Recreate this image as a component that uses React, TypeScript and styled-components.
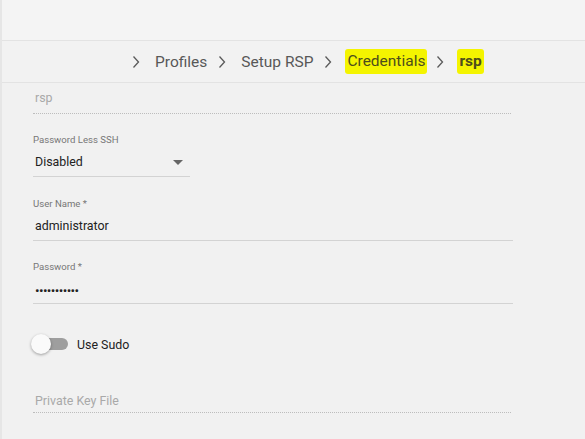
import React from "react";
import styled, { createGlobalStyle } from "styled-components";

const Global = createGlobalStyle`
  html, body { margin: 0; padding: 0; background: #f1f1f1; }
  body { font-family: Roboto, "Liberation Sans", Arial, sans-serif; }
  * { box-sizing: border-box; }
`;

const Frame = styled.div`
  width: 585px;
  height: 439px;
  overflow: hidden;
  border-left: 2px solid #e6e6e6;
  background: #f1f1f1;
  display: flex;
  flex-direction: column;
`;

const TopBar = styled.div`
  height: 41px;
  flex: none;
  background: #f4f4f4;
  border-bottom: 1px solid #e3e3e3;
`;

const Crumbs = styled.nav`
  height: 42px;
  flex: none;
  background: #f2f2f2;
  border-bottom: 1px solid #e3e3e3;
  display: flex;
  align-items: center;
  padding-left: 130px;
  font-size: 15.5px;
  color: #585858;
`;

const Chevron = styled.svg`
  width: 8px;
  height: 14px;
  margin-right: 13px;
  flex: none;
`;

const Crumb = styled.span<{ $mark?: boolean; $bold?: boolean }>`
  display: inline-block;
  padding: ${(p) => (p.$mark ? "3px 2px 4px" : "2px")};
  margin-right: 9px;
  line-height: 18px;
  font-weight: ${(p) => (p.$bold ? 700 : 400)};
  color: ${(p) => (p.$mark ? "#4d4d1c" : "#585858")};
  background: ${(p) => (p.$mark ? "#f4f400" : "transparent")};
  border-radius: 3px;
`;

const Form = styled.div`
  display: flex;
  flex-direction: column;
  padding: 5px 0 0 31px;
  font-size: 12.4px;
`;

const Field = styled.div<{ $width: number; $dotted?: boolean; $top?: number }>`
  width: ${(p) => p.$width}px;
  margin-top: ${(p) => p.$top ?? 0}px;
  display: flex;
  flex-direction: column;
  border-bottom: 1px ${(p) => (p.$dotted ? "dotted #bdbdbd" : "solid #d3d3d3")};
`;

const Label = styled.div`
  font-size: 9.6px;
  line-height: 12px;
  color: #777;
  margin-bottom: 6px;
`;

const Value = styled.div<{ $muted?: boolean; $gap: number }>`
  height: 20px;
  line-height: 20px;
  padding-left: 2px;
  color: ${(p) => (p.$muted ? "#a9a9a9" : "#222")};
  margin-bottom: ${(p) => p.$gap}px;
  display: flex;
  align-items: center;
  justify-content: space-between;
`;

const Dots = styled.span`
  font-size: 13.5px;
  letter-spacing: -0.6px;
  color: #222;
  padding-top: 1px;
`;

const Caret = styled.span`
  width: 0;
  height: 0;
  border-left: 5px solid transparent;
  border-right: 5px solid transparent;
  border-top: 5px solid #666;
  margin-right: 7px;
`;

const ToggleRow = styled.label`
  margin-top: 28px;
  height: 24px;
  display: flex;
  align-items: center;
  gap: 9px;
  color: #222;
`;

const Switch = styled.span`
  position: relative;
  width: 32px;
  height: 12px;
  margin-left: 3px;
  border-radius: 6px;
  background: #9e9e9e;
`;

const Thumb = styled.span`
  position: absolute;
  left: -5px;
  top: -4px;
  width: 20px;
  height: 20px;
  border-radius: 50%;
  background: #fafafa;
  box-shadow: 0 1px 3px rgba(0, 0, 0, 0.35);
`;

const ChevronIcon = () => (
  <Chevron viewBox="0 0 8 14">
    <polyline points="1.5,1.5 6.5,7 1.5,12.5" fill="none" stroke="#5a5a5a" strokeWidth="1.3" />
  </Chevron>
);

export default function App() {
  return (
    <>
      <Global />
      <Frame>
        <TopBar />
        <Crumbs>
          <ChevronIcon />
          <Crumb>Profiles</Crumb>
          <ChevronIcon />
          <Crumb>Setup RSP</Crumb>
          <ChevronIcon />
          <Crumb $mark>Credentials</Crumb>
          <ChevronIcon />
          <Crumb $mark $bold>rsp</Crumb>
        </Crumbs>
        <Form>
          <Field $width={478} $dotted>
            <Value $muted $gap={5}>rsp</Value>
          </Field>
          <Field $width={157} $top={20}>
            <Label>Password Less SSH</Label>
            <Value $gap={4}>
              Disabled
              <Caret />
            </Value>
          </Field>
          <Field $width={480} $top={21}>
            <Label>User Name *</Label>
            <Value $gap={4}>administrator</Value>
          </Field>
          <Field $width={480} $top={20}>
            <Label>Password *</Label>
            <Value $gap={4}>
              <Dots>•••••••••••</Dots>
            </Value>
          </Field>
          <ToggleRow>
            <Switch>
              <Thumb />
            </Switch>
            Use Sudo
          </ToggleRow>
          <Field $width={478} $dotted $top={35}>
            <Value $muted $gap={1}>Private Key File</Value>
          </Field>
        </Form>
      </Frame>
    </>
  );
}
